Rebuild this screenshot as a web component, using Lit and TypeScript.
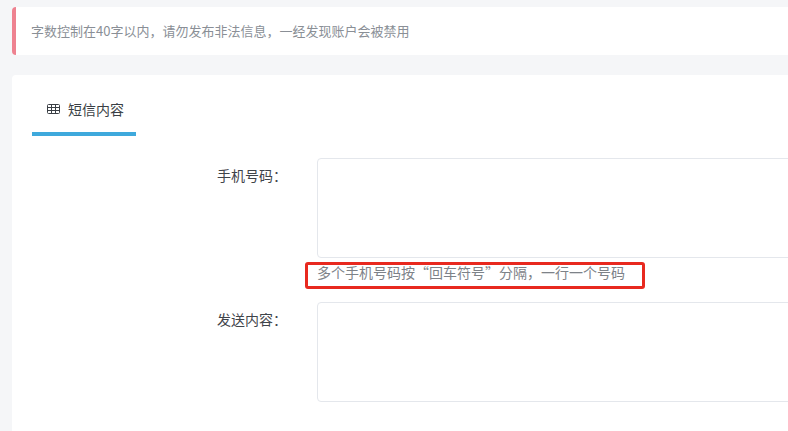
import { LitElement, html, css } from "lit";
import { customElement } from "lit/decorators.js";

@customElement("app-root")
export class AppRoot extends LitElement {
  static styles = css`
    :host {
      display: block;
      width: 788px;
      height: 431px;
      overflow: hidden;
      background: #f5f6f8;
      font-family: "Noto Sans CJK SC", "Liberation Sans", sans-serif;
      color: #3a3f45;
    }
    .page {
      display: flex;
      flex-direction: column;
      gap: 20px;
      padding: 7px 0 0 12px;
      width: 900px;
    }
    .alert {
      height: 48px;
      box-sizing: border-box;
      display: flex;
      align-items: center;
      padding: 0 0 2px 15px;
      background: #fff;
      border-left: 4px solid #ee8290;
      border-radius: 4px 0 0 4px;
      font-size: 13px;
      color: #8a8f96;
    }
    .card {
      background: #fff;
      border-radius: 4px 0 0 0;
      padding: 0 20px;
      height: 400px;
    }
    .tabs {
      display: flex;
    }
    .tab {
      width: 104px;
      height: 61px;
      box-sizing: border-box;
      border-bottom: 4px solid #3ea9dc;
      display: flex;
      align-items: center;
      padding: 11px 0 0 15px;
      gap: 8px;
      font-size: 14px;
      color: #3a3f45;
    }
    .tab svg {
      display: block;
      flex: none;
    }
    .form {
      display: flex;
      flex-direction: column;
      padding-top: 22px;
    }
    .row {
      display: grid;
      grid-template-columns: 285px 1fr;
    }
    .label {
      font-size: 14px;
      line-height: 20px;
      padding: 7px 0 0 185px;
      color: #3f444a;
    }
    .box {
      height: 100px;
      box-sizing: border-box;
      border: 1px solid #e4e7ec;
      border-radius: 4px;
      background: #fff;
      width: 100%;
      display: block;
      padding: 0;
      resize: none;
      outline: none;
    }
    .hint-row {
      height: 44px;
    }
    .hint {
      position: relative;
      font-size: 14px;
      line-height: 20px;
      padding-top: 4px;
      color: #7d8288;
    }
    .mark {
      position: absolute;
      left: -12px;
      top: 4px;
      width: 340px;
      height: 27px;
      box-sizing: border-box;
      border: 3px solid #e8291f;
      border-radius: 3px;
    }
  `;

  render() {
    return html`
      <div class="page" lang="zh-CN">
        <div class="alert">字数控制在40字以内，请勿发布非法信息，一经发现账户会被禁用</div>
        <div class="card">
          <div class="tabs">
            <div class="tab">
              <svg width="13" height="10" viewBox="0 0 13 10" fill="none" stroke="#3a3f45" stroke-width="1">
                <rect x="0.5" y="0.5" width="12" height="9" rx="1" />
                <path d="M0.5 3.5H12.5M0.5 6.5H12.5M4.5 0.5V9.5M8.5 0.5V9.5" />
              </svg>
              <span>短信内容</span>
            </div>
          </div>
          <div class="form">
            <div class="row">
              <div class="label">手机号码：</div>
              <textarea class="box"></textarea>
            </div>
            <div class="row hint-row">
              <div></div>
              <div class="hint">多个手机号码按“回车符号”分隔，一行一个号码<div class="mark"></div></div>
            </div>
            <div class="row">
              <div class="label">发送内容：</div>
              <textarea class="box"></textarea>
            </div>
          </div>
        </div>
      </div>
    `;
  }
}
